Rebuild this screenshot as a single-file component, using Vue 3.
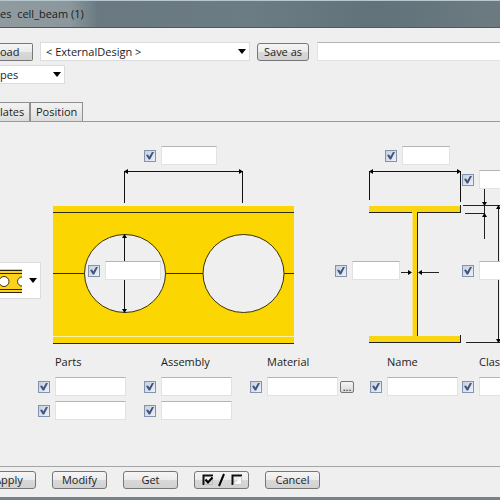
<script setup>
import { ref } from 'vue'

const design = ref('ext')
const type = ref('pes')
const saveName = ref('')

const dimensions = [
  { id: 'spacing', label: 'Opening spacing', size: 'wide' },
  { id: 'diameter', label: 'Opening diameter', size: 'wide' },
  { id: 'flange-width', label: 'Flange width', size: 'narrow' },
  { id: 'flange-thickness', label: 'Flange thickness', size: 'wide' },
  { id: 'web-thickness', label: 'Web thickness', size: 'narrow' },
  { id: 'height', label: 'Beam height', size: 'wide' },
]

const columns = [
  { name: 'Parts', rows: 2 },
  { name: 'Assembly', rows: 2 },
  { name: 'Material', rows: 1, browse: true },
  { name: 'Name', rows: 1 },
  { name: 'Class', rows: 1 },
]
</script>

<template>
  <div class="window">
    <header class="title">es&nbsp; cell_beam (1)</header>

    <div class="toolbar">
      <div class="bar">
        <button type="button" class="btn cut load">oad</button>
        <div class="combo design">
          <select v-model="design" aria-label="Design">
            <option value="ext">&lt; ExternalDesign &gt;</option>
          </select>
        </div>
        <button type="button" class="btn save">Save as</button>
        <input v-model="saveName" class="field grow" type="text" aria-label="Save as name" />
      </div>
      <div class="combo types">
        <select v-model="type" aria-label="Types">
          <option value="pes">pes</option>
        </select>
      </div>
    </div>

    <nav class="tabs">
      <button type="button" class="tab first">lates</button>
      <button type="button" class="tab">Position</button>
    </nav>

    <main class="panel">
      <section class="stage">
        <svg class="drawing" width="640" height="230" viewBox="0 122 640 230" shape-rendering="crispEdges" aria-hidden="true">
          <rect x="53" y="206" width="241" height="138" fill="#fcd600" />
          <rect x="53" y="336" width="241" height="1" fill="#fff3a0" />
          <g fill="#2e2908">
            <rect x="53" y="212" width="241" height="1" />
            <rect x="53" y="343" width="241" height="1" />
            <rect x="53" y="273" width="241" height="1" />
          </g>
          <g fill="#efefef" stroke="#3a3208" shape-rendering="auto">
            <ellipse cx="125" cy="273.5" rx="40.5" ry="39" />
            <ellipse cx="243.5" cy="273.5" rx="40.5" ry="39" />
          </g>

          <g fill="#111">
            <rect x="124" y="171" width="1" height="32" />
            <rect x="242" y="171" width="1" height="32" />
            <rect x="124" y="171" width="119" height="1" />
            <rect x="124" y="235" width="1" height="77" />
            <rect x="369" y="171" width="1" height="29" />
            <rect x="460" y="171" width="1" height="31" />
            <rect x="369" y="171" width="92" height="1" />
          </g>

          <g fill="#fad511">
            <rect x="369" y="206" width="91" height="7" />
            <rect x="412" y="212" width="5" height="125" />
            <rect x="369" y="336" width="91" height="6" />
          </g>
          <rect x="412" y="213" width="1" height="123" fill="#f9e67c" />
          <g fill="#222">
            <rect x="369" y="212" width="43" height="1" />
            <rect x="417" y="212" width="44" height="1" />
            <rect x="417" y="212" width="1" height="124" />
            <rect x="460" y="205" width="1" height="8" />
            <rect x="369" y="342" width="92" height="1" />
            <rect x="460" y="335" width="1" height="8" />
            <rect x="463" y="205" width="37" height="1" />
            <rect x="465" y="213" width="20" height="1" />
            <rect x="484" y="188" width="1" height="51" />
            <rect x="498" y="206" width="1" height="136" />
            <rect x="466" y="342" width="34" height="1" />
            <rect x="401" y="272" width="9" height="1" />
            <rect x="420" y="272" width="19" height="1" />
          </g>

          <g fill="#000" shape-rendering="auto">
            <path d="M124 171.5l4-2.5v5z" />
            <path d="M243 171.5l-4-2.5v5z" />
            <path d="M369 171.5l4-2.5v5z" />
            <path d="M461 171.5l-4-2.5v5z" />
            <path d="M124.5 234l-2.5 4h5z" />
            <path d="M124.5 313l-2.5-4h5z" />
            <path d="M484.5 206l-2.5-4h5z" />
            <path d="M484.5 213l-2.5 4h5z" />
            <path d="M498.5 205l-2.5 4h5z" />
            <path d="M498.5 343l-2.5-4h5z" />
            <path d="M412 272.5l-4-2.5v5z" />
            <path d="M418 272.5l4-2.5v5z" />
          </g>
        </svg>

        <div v-for="d in dimensions" :key="d.id" class="pair pin" :class="[d.id, d.size]">
          <input type="checkbox" class="check" checked :aria-label="'Use ' + d.label" />
          <input type="text" class="field" :aria-label="d.label" />
        </div>

        <button type="button" class="picture" aria-label="Opening pattern">
          <svg width="22" height="24" viewBox="0 0 22 24" aria-hidden="true">
            <rect width="22" height="24" fill="#fcd21c" />
            <path d="M0 1.5h22M0 4.5h22M0 20.5h22M0 23.5h22" stroke="#2a2508" />
            <circle cx="4" cy="12.5" r="5" fill="#fff" stroke="#3a3208" />
            <path d="M22 8a4.5 4.5 0 0 0 0 9z" fill="#fff" />
            <path d="M22 8a4.5 4.5 0 0 0 0 9" fill="none" stroke="#3a3208" />
          </svg>
        </button>
      </section>

      <section class="attributes">
        <div v-for="c in columns" :key="c.name" class="column">
          <span class="caption">{{ c.name }}</span>
          <div v-for="r in c.rows" :key="r" class="pair">
            <input type="checkbox" class="check" checked :aria-label="'Use ' + c.name + ' ' + r" />
            <input type="text" class="field" :aria-label="c.name + ' ' + r" />
            <button v-if="c.browse" type="button" class="browse" aria-label="Browse materials">...</button>
          </div>
        </div>
      </section>
    </main>

    <footer class="actions">
      <button type="button" class="btn">Apply</button>
      <button type="button" class="btn">Modify</button>
      <button type="button" class="btn">Get</button>
      <button type="button" class="btn" aria-label="Toggle all">
        <svg width="42" height="14" viewBox="0 0 42 14" fill="none" aria-hidden="true">
          <path d="M2.5 12V2.5H12" stroke="#111" stroke-width="2" />
          <path d="M3.5 11.5h8v-8" stroke="#bbb" />
          <path d="M4.5 6.5l2.5 3 4.5-5" stroke="#000" stroke-width="2" />
          <path d="M18 13l5-12" stroke="#000" stroke-width="2" />
          <path d="M31.5 12V2.5H41" stroke="#111" stroke-width="2" />
          <path d="M32.5 11.5h8v-8" stroke="#ccc" fill="#fafafa" />
        </svg>
      </button>
      <button type="button" class="btn">Cancel</button>
    </footer>
  </div>
</template>

<style>
body {
  margin: 0;
  background: #efefef;
}
</style>

<style scoped>
.window {
  display: flex;
  flex-direction: column;
  box-sizing: border-box;
  min-height: 100vh;
  overflow: hidden;
  background: #efefef;
  border-bottom: 3px solid #77838c;
  font: 11px/16px "Open Sans", "Noto Sans", sans-serif;
  color: #1c1c1c;
}
.window *,
.window *::before,
.window *::after {
  box-sizing: border-box;
}
button,
input,
select {
  margin: 0;
  padding: 0;
  font: inherit;
  color: inherit;
}
.title {
  height: 28px;
  border-top: 1px solid #b5c8cf;
  border-bottom: 1px solid #4d5a62;
  background: linear-gradient(90deg, #909b9f 0, #8b979c 70px, #6a7981 98px, #6c7c84 50%, #61727a 75%, #6d7b81);
  line-height: 25px;
  white-space: pre;
}
.toolbar {
  display: flex;
  flex-direction: column;
  gap: 4px;
  padding-top: 14px;
}
.bar {
  display: flex;
  align-items: center;
}
.btn {
  flex: none;
  height: 18px;
  border: 1px solid #777;
  border-radius: 3px;
  background: linear-gradient(#f5f5f5, #ebebeb 50%, #d8d8d8 52%, #d2d2d2);
  line-height: 16px;
  text-align: center;
}
.cut {
  border-left: 0;
  border-radius: 0 2px 2px 0;
  text-align: left;
}
.load {
  width: 33px;
  margin-right: 7px;
}
.save {
  width: 52px;
  margin: 0 8px 0 7px;
}
.combo {
  position: relative;
  height: 19px;
}
.combo::after {
  content: "";
  position: absolute;
  top: 7px;
  right: 4px;
  border: 4px solid transparent;
  border-top: 5px solid #000;
  border-bottom: 0;
  pointer-events: none;
}
.combo select {
  display: block;
  width: 100%;
  height: 19px;
  border: 1px solid #dcdcdc;
  border-radius: 0;
  background: #fff;
  appearance: none;
}
.design {
  flex: 0 0 210px;
}
.design select {
  padding-left: 5px;
}
.types {
  width: 65px;
}
.types select {
  border-left: 0;
}
.field {
  min-width: 0;
  height: 19px;
  border: 1px solid #e2e2e2;
  border-top-color: #b4b4b4;
  background: #fff;
}
.grow {
  flex: 1;
  border-right: 0;
}
.tabs {
  display: flex;
  margin-top: 18px;
  border-bottom: 1px solid #999;
}
.tab {
  height: 19px;
  padding: 0 5px;
  border: 1px solid #8f8f8f;
  border-bottom: 0;
  background: linear-gradient(#f2f2f2, #e9e9e9 50%, #dcdcdc);
  line-height: 18px;
}
.first {
  width: 30px;
  padding: 0;
  border-left: 0;
  text-align: left;
}
.panel {
  flex: 1;
}
.stage {
  position: relative;
  height: 230px;
  overflow: hidden;
}
.drawing {
  display: block;
}
.pair {
  display: flex;
  align-items: center;
  gap: 5px;
}
.check {
  position: relative;
  flex: none;
  width: 12px;
  height: 12px;
  border: 1px solid #8393ab;
  background: linear-gradient(135deg, #c5cfdf, #eef2f8);
  appearance: none;
}
.check:checked::before {
  content: "";
  position: absolute;
  inset: 1px;
  background: #40557f;
  clip-path: polygon(0 45%, 25% 38%, 42% 62%, 78% 0, 100% 5%, 52% 100%, 34% 100%);
}
.pin {
  position: absolute;
}
.wide .field {
  width: 56px;
}
.narrow .field {
  width: 48px;
}
.spacing {
  left: 144px;
  top: 24px;
}
.diameter {
  left: 88px;
  top: 139px;
}
.flange-width {
  left: 385px;
  top: 24px;
}
.flange-thickness {
  left: 462px;
  top: 48px;
}
.web-thickness {
  left: 335px;
  top: 139px;
}
.height {
  left: 462px;
  top: 139px;
}
.picture {
  position: absolute;
  left: 0;
  top: 140px;
  display: flex;
  align-items: center;
  gap: 7px;
  width: 41px;
  height: 37px;
  border: 1px solid #dcdcdc;
  border-left: 0;
  background: #fff;
}
.picture::after {
  content: "";
  border: 4px solid transparent;
  border-top: 5px solid #000;
  border-bottom: 0;
}
.attributes {
  display: grid;
  grid-template-columns: 106px 106px 120px 92px 92px;
  padding: 2px 0 0 38px;
}
.column {
  display: flex;
  flex-direction: column;
  gap: 5px;
}
.caption {
  height: 18px;
  padding-left: 17px;
}
.column .field {
  width: 71px;
}
.browse {
  width: 14px;
  height: 12px;
  margin-left: -3px;
  border: 1px solid #777;
  border-radius: 2px;
  background: linear-gradient(#f5f5f5, #d8d8d8);
  line-height: 6px;
}
.actions {
  display: flex;
  gap: 16px;
  height: 31px;
  padding-top: 4px;
  border-top: 1px solid #a5a5a5;
}
.actions .btn {
  display: flex;
  align-items: center;
  justify-content: center;
  width: 55px;
}
.actions .btn:first-child {
  margin-left: -19px;
}
</style>
